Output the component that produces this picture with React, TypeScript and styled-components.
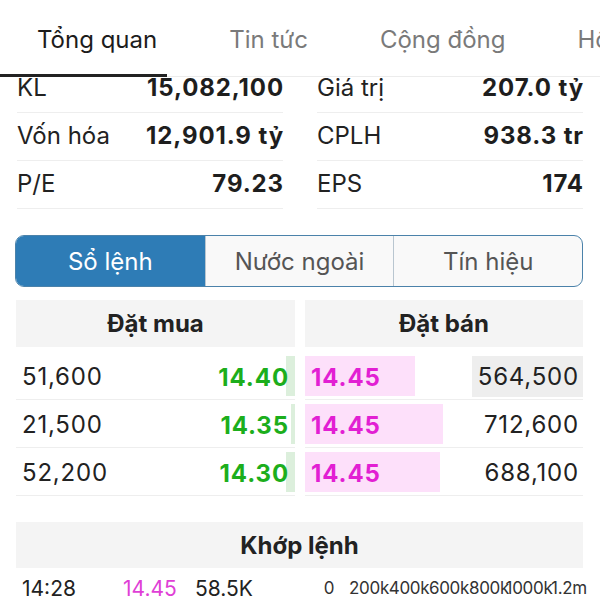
import styled, { createGlobalStyle } from "styled-components";

const GlobalStyle = createGlobalStyle`
  html, body {
    margin: 0;
    padding: 0;
    background: #ffffff;
    overflow: hidden;
  }
  body {
    font-family: Inter, "Noto Sans", "DejaVu Sans", sans-serif;
    color: #222;
  }
`;

type Stat = { label: string; value: string };

const stats: Stat[] = [
  { label: "KL", value: "15,082,100" },
  { label: "Giá trị", value: "207.0 tỷ" },
  { label: "Vốn hóa", value: "12,901.9 tỷ" },
  { label: "CPLH", value: "938.3 tr" },
  { label: "P/E", value: "79.23" },
  { label: "EPS", value: "174" },
];

type Order = {
  bidQty: string;
  bidPrice: string;
  bidBar: number;
  askPrice: string;
  askQty: string;
  askBar: number;
  highlight?: boolean;
};

const orders: Order[] = [
  { bidQty: "51,600", bidPrice: "14.40", bidBar: 9, askPrice: "14.45", askQty: "564,500", askBar: 110, highlight: true },
  { bidQty: "21,500", bidPrice: "14.35", bidBar: 4, askPrice: "14.45", askQty: "712,600", askBar: 138 },
  { bidQty: "52,200", bidPrice: "14.30", bidBar: 9, askPrice: "14.45", askQty: "688,100", askBar: 135 },
];

const ticks = ["0", "200k", "400k", "600k", "800k", "1000k", "1.2m"];

export default function App() {
  return (
    <Page>
      <GlobalStyle />
      <TabBar>
        <Tab $active>Tổng quan</Tab>
        <Tab>Tin tức</Tab>
        <Tab>Cộng đồng</Tab>
        <Tab>Hồ sơ</Tab>
      </TabBar>

      <StatsGrid>
        {stats.map((s) => (
          <StatRow key={s.label}>
            <StatLabel>{s.label}</StatLabel>
            <StatValue>{s.value}</StatValue>
          </StatRow>
        ))}
      </StatsGrid>

      <Segmented>
        <Segment $active>Sổ lệnh</Segment>
        <Segment>Nước ngoài</Segment>
        <Segment>Tín hiệu</Segment>
      </Segmented>

      <Book>
        <BookSide>
          <SideHeader>Đặt mua</SideHeader>
          {orders.map((o) => (
            <BookRow key={o.bidPrice}>
              <BidBar style={{ width: o.bidBar }} />
              <Qty>{o.bidQty}</Qty>
              <Price $side="bid">{o.bidPrice}</Price>
            </BookRow>
          ))}
        </BookSide>
        <BookSide>
          <SideHeader>Đặt bán</SideHeader>
          {orders.map((o) => (
            <BookRow key={o.askQty}>
              <AskBar style={{ width: o.askBar }} />
              <Price $side="ask">{o.askPrice}</Price>
              <Qty $highlight={o.highlight}>{o.askQty}</Qty>
            </BookRow>
          ))}
        </BookSide>
      </Book>

      <MatchHeader>Khớp lệnh</MatchHeader>
      <MatchRow>
        <MatchTime>14:28</MatchTime>
        <MatchPrice>14.45</MatchPrice>
        <MatchVol>58.5K</MatchVol>
        <Axis>
          {ticks.map((t) => (
            <Tick key={t}>{t}</Tick>
          ))}
        </Axis>
      </MatchRow>
    </Page>
  );
}

// =================== Styled Components ===================

const Page = styled.div`
  width: 600px;
  height: 600px;
  overflow: hidden;
`;

const TabBar = styled.div`
  display: flex;
  gap: 72px;
  height: 77px;
  padding-left: 37px;
  box-sizing: border-box;
  border-bottom: 1px solid #ececec;
  white-space: nowrap;
`;

const Tab = styled.div<{ $active?: boolean }>`
  position: relative;
  padding-top: 25px;
  font-size: 24px;
  color: ${({ $active }) => ($active ? "#1c1c1c" : "#7a7a7a")};

  &::after {
    content: "";
    display: ${({ $active }) => ($active ? "block" : "none")};
    position: absolute;
    left: -37px;
    right: -10px;
    bottom: -1px;
    height: 3px;
    background: #222;
  }
`;

const StatsGrid = styled.div`
  display: grid;
  grid-template-columns: 266px 266px;
  column-gap: 34px;
  padding-left: 17px;
`;

const StatRow = styled.div`
  display: flex;
  justify-content: space-between;
  align-items: flex-end;
  height: 48px;
  padding-bottom: 10px;
  box-sizing: border-box;
  border-bottom: 1px solid #eeeeee;
  font-size: 24px;

  &:nth-child(-n + 2) {
    height: 36px;
  }
`;

const StatLabel = styled.span`
  color: #222;
`;

const StatValue = styled.span`
  font-weight: 700;
  letter-spacing: 0.9px;
  margin-right: -1px;
  color: #1e1e1e;
`;

const Segmented = styled.div`
  display: grid;
  grid-template-columns: repeat(3, 1fr);
  margin: 26px 17px 0 15px;
  height: 52px;
  box-sizing: border-box;
  border: 1.5px solid #4b82aa;
  border-radius: 9px;
  overflow: hidden;
  background: #f9f9f9;
`;

const Segment = styled.div<{ $active?: boolean }>`
  display: flex;
  align-items: center;
  justify-content: center;
  font-size: 24px;
  color: ${({ $active }) => ($active ? "#ffffff" : "#555555")};
  background: ${({ $active }) => ($active ? "#2e7cb6" : "transparent")};

  & + & {
    border-left: 1px solid #b9c6d0;
  }
`;

const Book = styled.div`
  display: grid;
  grid-template-columns: 279px 278px;
  column-gap: 10px;
  margin: 13px 17px 0 16px;
`;

const BookSide = styled.div`
  display: flex;
  flex-direction: column;
`;

const SideHeader = styled.div`
  height: 47px;
  margin-bottom: 5px;
  display: flex;
  align-items: center;
  justify-content: center;
  background: #f4f4f4;
  font-size: 24px;
  font-weight: 700;
  color: #222;
`;

const BookRow = styled.div`
  position: relative;
  display: flex;
  justify-content: space-between;
  align-items: center;
  height: 48px;
  padding-top: 3px;
  box-sizing: border-box;
  border-bottom: 1px solid #eeeeee;
`;

const BidBar = styled.div`
  position: absolute;
  right: 0;
  top: 4px;
  bottom: 3px;
  background: #dcefdc;
`;

const AskBar = styled.div`
  position: absolute;
  left: 0;
  top: 4px;
  bottom: 3px;
  background: #fde0fa;
`;

const Qty = styled.span<{ $highlight?: boolean }>`
  position: relative;
  align-self: stretch;
  display: flex;
  align-items: center;
  margin-top: 1px;
  margin-bottom: 2px;
  padding: 0 4px 0 6px;
  font-size: 24px;
  letter-spacing: 0.8px;
  color: #222;
  background: ${({ $highlight }) => ($highlight ? "#eeeeee" : "transparent")};
`;

const Price = styled.span<{ $side: "bid" | "ask" }>`
  position: relative;
  padding: ${({ $side }) => ($side === "bid" ? "0 6px 0 0" : "0 0 0 6px")};
  font-size: 24px;
  font-weight: 700;
  letter-spacing: 0.9px;
  color: ${({ $side }) => ($side === "bid" ? "#1cae1c" : "#e21fd3")};
`;

const MatchHeader = styled.div`
  margin: 26px 17px 0 16px;
  height: 46px;
  display: flex;
  align-items: center;
  justify-content: center;
  background: #f4f4f4;
  font-size: 24px;
  font-weight: 700;
  color: #222;
`;

const MatchRow = styled.div`
  display: flex;
  align-items: center;
  height: 40px;
  padding-left: 22px;
  font-size: 21px;
  white-space: nowrap;
`;

const MatchTime = styled.span`
  width: 101px;
  color: #222;
`;

const MatchPrice = styled.span`
  width: 72px;
  color: #df3fd6;
`;

const MatchVol = styled.span`
  width: 114px;
  color: #222;
`;

const Axis = styled.div`
  display: grid;
  grid-template-columns: repeat(7, 40px);
  font-size: 17px;
  color: #333;
`;

const Tick = styled.span`
  display: flex;
  justify-content: center;
  white-space: nowrap;
  letter-spacing: -0.3px;
`;
